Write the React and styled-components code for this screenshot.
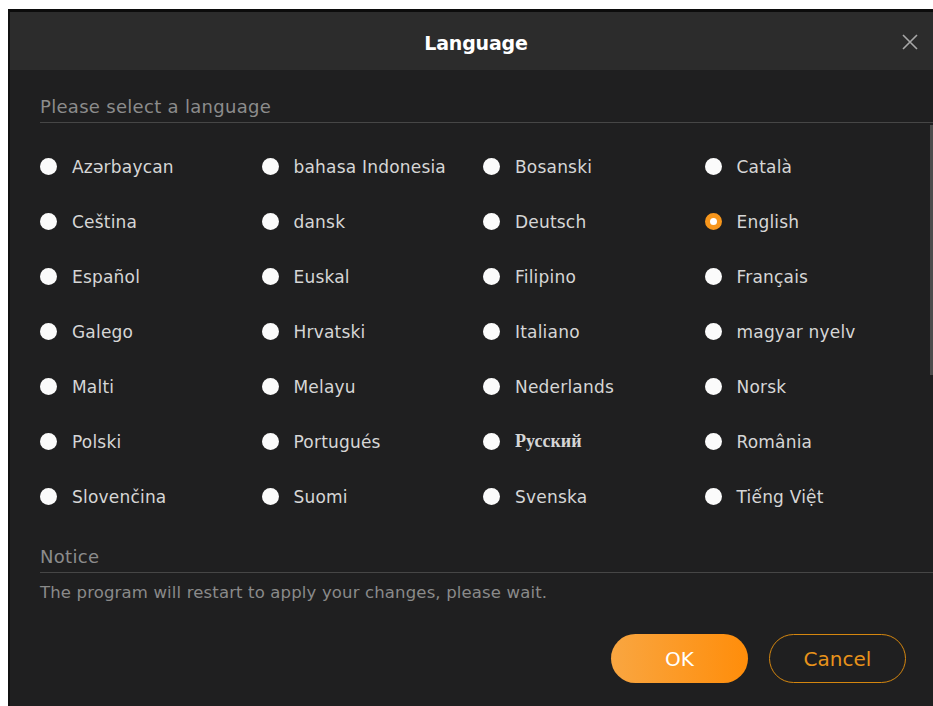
import React, { useState } from "react";
import styled, { createGlobalStyle } from "styled-components";

const SANS = '"DejaVu Sans", "Liberation Sans", sans-serif';

const GlobalStyle = createGlobalStyle`
  html, body {
    margin: 0;
    padding: 0;
    background: #ffffff;
    overflow: hidden;
  }
  body {
    font-family: ${SANS};
  }
`;

const LANGUAGES = [
  "Azərbaycan", "bahasa Indonesia", "Bosanski", "Català",
  "Ceština", "dansk", "Deutsch", "English",
  "Español", "Euskal", "Filipino", "Français",
  "Galego", "Hrvatski", "Italiano", "magyar nyelv",
  "Malti", "Melayu", "Nederlands", "Norsk",
  "Polski", "Portugués", "Русский", "România",
  "Slovenčina", "Suomi", "Svenska", "Tiếng Việt",
];

const Dialog = styled.div`
  margin: 9px 0 0 8px;
  width: 930px;
  height: 720px;
  background: #1f1f20;
  border-top: 3px solid #0c0c0c;
  border-left: 2px solid #111;
  box-sizing: border-box;
  display: flex;
  flex-direction: column;
`;

const Header = styled.div`
  height: 58px;
  flex: none;
  background: #2c2c2c;
  display: flex;
  align-items: center;
  justify-content: center;
  position: relative;
`;

const Title = styled.div`
  color: #ffffff;
  font-size: 19px;
  font-weight: 700;
  letter-spacing: -0.2px;
  margin-left: 4px;
  margin-top: 4px;
`;

const CloseButton = styled.button`
  position: absolute;
  right: 18px;
  top: 20px;
  width: 20px;
  height: 20px;
  padding: 0;
  border: none;
  background: none;
  cursor: pointer;
`;

const Body = styled.div`
  position: relative;
  flex: 1;
  padding-left: 30px;
`;

const ScrollThumb = styled.div`
  position: absolute;
  right: 5px;
  top: 55px;
  width: 3px;
  height: 250px;
  background: #4c4c4c;
`;

const SectionLabel = styled.div`
  margin-top: ${(p) => p.$top}px;
  color: #8c8c8c;
  font-size: 18px;
  letter-spacing: 0.3px;
  line-height: 24px;
  padding-bottom: 3px;
  border-bottom: 1px solid #464646;
`;

const Grid = styled.div`
  margin-top: 16px;
  display: grid;
  grid-template-columns: repeat(4, 221.5px);
  grid-auto-rows: 55px;
`;

const Option = styled.label`
  display: flex;
  align-items: center;
  gap: 15px;
  cursor: pointer;
  color: #d6d6d6;
  font-size: ${(p) => (p.$serif ? 18 : 17)}px;
  letter-spacing: ${(p) => (p.$serif ? 0 : 0.2)}px;
  font-family: ${(p) => (p.$serif ? '"Liberation Serif", serif' : SANS)};
  font-weight: ${(p) => (p.$serif ? 700 : 400)};
`;

const Radio = styled.span`
  flex: none;
  width: 17px;
  height: 17px;
  border-radius: 50%;
  box-sizing: border-box;
  background: ${(p) => (p.$checked ? "#ffffff" : "#fbfbfb")};
  border: ${(p) => (p.$checked ? "5px solid #f7961c" : "none")};
`;

const Message = styled.div`
  margin-top: 9px;
  color: #8a8a8a;
  font-size: 16.5px;
  letter-spacing: 0.15px;
  line-height: 22px;
`;

const Actions = styled.div`
  margin-top: 30px;
  padding-right: 32px;
  display: flex;
  justify-content: flex-end;
  gap: 21px;
`;

const Button = styled.button`
  width: 137px;
  height: 49px;
  border-radius: 25px;
  box-sizing: border-box;
  font-family: ${SANS};
  font-size: 20px;
  cursor: pointer;
  ${(p) =>
    p.$primary
      ? `
    border: none;
    color: #ffffff;
    background: linear-gradient(90deg, #f9a641 0%, #ff8d0a 100%);
  `
      : `
    border: 1.5px solid #d4860f;
    color: #e8931b;
    background: transparent;
  `}
`;

const CloseIcon = () => (
  <svg width="20" height="20" viewBox="0 0 20 20">
    <path d="M3 3 L17 17 M17 3 L3 17" stroke="#a8a8a8" strokeWidth="1.6" fill="none" />
  </svg>
);

const App = () => {
  const [selected, setSelected] = useState("English");

  return (
    <>
      <GlobalStyle />
      <Dialog>
        <Header>
          <Title>Language</Title>
          <CloseButton aria-label="Close">
            <CloseIcon />
          </CloseButton>
        </Header>
        <Body>
          <ScrollThumb />
          <SectionLabel $top={25}>Please select a language</SectionLabel>
          <Grid>
            {LANGUAGES.map((lang) => (
              <Option
                key={lang}
                $serif={lang === "Русский"}
                onClick={() => setSelected(lang)}
              >
                <Radio $checked={selected === lang} />
                {lang}
              </Option>
            ))}
          </Grid>
          <SectionLabel $top={21}>Notice</SectionLabel>
          <Message>The program will restart to apply your changes, please wait.</Message>
          <Actions>
            <Button $primary>OK</Button>
            <Button>Cancel</Button>
          </Actions>
        </Body>
      </Dialog>
    </>
  );
};

export default App;
